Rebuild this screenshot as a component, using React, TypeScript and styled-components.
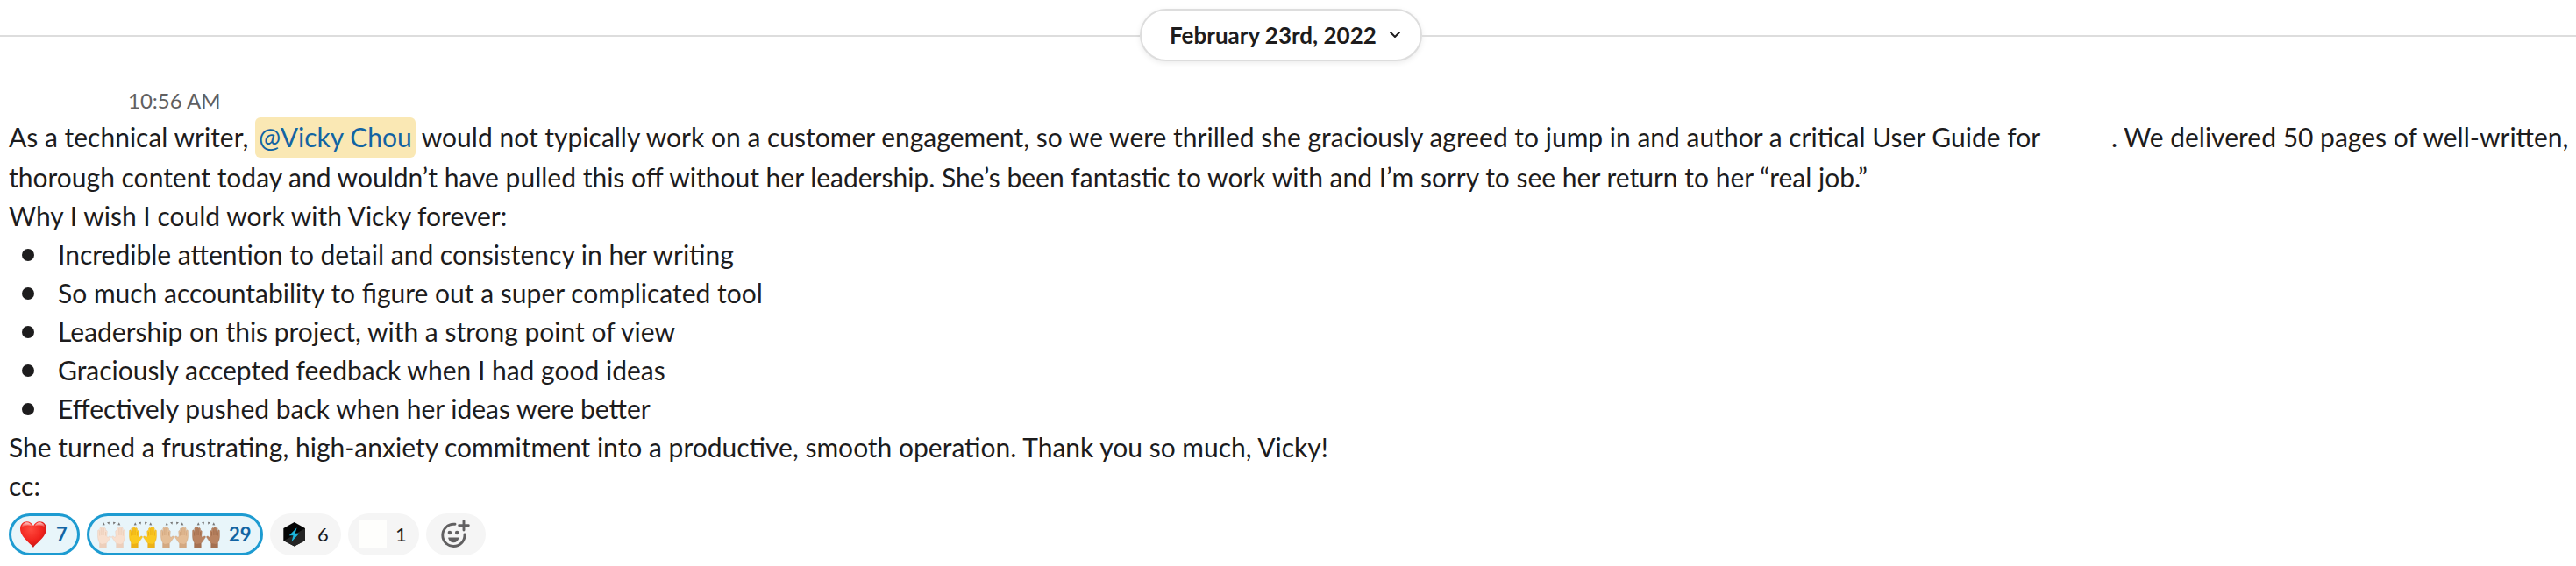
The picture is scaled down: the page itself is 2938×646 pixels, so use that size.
import React from "react";
import styled, { createGlobalStyle } from "styled-components";

const GlobalStyle = createGlobalStyle`
  body { margin: 0; background: #fff; }
  * { box-sizing: border-box; }
`;

const Page = styled.main`
  width: 2938px;
  height: 646px;
  overflow: hidden;
  background: #fff;
  color: #1d1c1d;
  font-family: Lato, "Noto Sans", sans-serif;
  font-size: 30px;
  line-height: 44px;
`;

const DateDivider = styled.header`
  display: flex;
  align-items: center;
  padding-top: 10px;
  height: 70px;
`;

const Rule = styled.span<{ $width?: number }>`
  height: 2px;
  margin-top: 2px;
  background: #dddddd;
  ${(p) => (p.$width ? `width: ${p.$width}px;` : "flex: 1;")}
`;

const DateButton = styled.button`
  display: flex;
  align-items: center;
  justify-content: space-between;
  width: 322px;
  height: 60px;
  padding: 0 22px 0 32px;
  border: 2px solid #dddddd;
  border-radius: 30px;
  background: #fff;
  box-shadow: 0 2px 6px rgba(0, 0, 0, 0.08);
  color: #1d1c1d;
  font: bold 26px/40px Lato, sans-serif;
  white-space: nowrap;
`;

const Time = styled.time`
  display: block;
  height: 64px;
  padding: 23px 0 0 146px;
  color: #616061;
  font-size: 24px;
  line-height: 44px;
`;

const Body = styled.article`
  padding-left: 10px;
  white-space: nowrap;
`;

const Line = styled.div<{ $tall?: boolean }>`
  height: ${(p) => (p.$tall ? 46 : 44)}px;
`;

const Mention = styled.span`
  display: inline-block;
  height: 46px;
  padding: 0 4px 2px;
  border-radius: 6px;
  background: #fae8b4;
  color: #1264a3;
`;

const Blank = styled.span`
  display: inline-block;
  width: 66px;
`;

const List = styled.ul`
  margin: 0;
  padding: 0;
  list-style: none;
`;

const Item = styled.li`
  display: flex;
  align-items: center;
  height: 44px;
  gap: 27px;
  padding-left: 15px;

  &::before {
    content: "";
    width: 14px;
    height: 14px;
    margin-top: 2px;
    border-radius: 50%;
    background: #1d1c1d;
  }
`;

const Reactions = styled.footer`
  display: flex;
  gap: 8px;
  padding: 10px 0 0 10px;
`;

const Reaction = styled.button<{ $active?: boolean; $width: number }>`
  display: flex;
  align-items: center;
  width: ${(p) => p.$width}px;
  height: 48px;
  padding: 0 0 0 12px;
  border: 0;
  border-radius: 24px;
  background: ${(p) => (p.$active ? "#e8f5fa" : "#f5f5f5")};
  box-shadow: ${(p) => (p.$active ? "inset 0 0 0 3px #1d9bd1" : "none")};
  color: ${(p) => (p.$active ? "#1264a3" : "#1d1c1d")};
  font: ${(p) => (p.$active ? "bold" : "normal")} 22px/44px Lato, sans-serif;
`;

const Emojis = styled.span`
  display: flex;
  gap: 4px;
`;

const Count = styled.span`
  margin-left: 10px;
`;

const EmptyEmoji = styled.span`
  width: 32px;
  height: 32px;
  background: #fefefc;
`;

const Heart = () => (
  <svg width="32" height="32" viewBox="0 0 32 32">
    <defs>
      <radialGradient id="heart" cx="0.4" cy="0.3" r="0.75">
        <stop offset="0" stopColor="#ff4a3e" />
        <stop offset="0.6" stopColor="#f0231d" />
        <stop offset="1" stopColor="#bd1110" />
      </radialGradient>
      <linearGradient id="shine" x1="0" y1="0" x2="0" y2="1">
        <stop offset="0" stopColor="#fff" stopOpacity="0.75" />
        <stop offset="1" stopColor="#fff" stopOpacity="0" />
      </linearGradient>
    </defs>
    <path
      d="M16 31C14 27 1 19 1 9.500C1 4.500 4.500 1.300 8.500 1.300C12 1.300 14.800 3.300 16 6.300C17.200 3.300 20 1.300 23.500 1.300C27.500 1.300 31 4.500 31 9.500C31 19 18 27 16 31Z"
      fill="url(#heart)"
    />
    <path d="M2.800 8C3.300 4.500 5.800 2.300 8.700 2.300C11.500 2.300 13.500 4 14.300 6.500C11 4.800 6 5 2.800 8Z" fill="url(#shine)" />
    <path d="M17.700 6.500C18.500 4 20.500 2.300 23.300 2.300C26.200 2.300 28.700 4.500 29.200 8C26 5 21 4.800 17.700 6.500Z" fill="url(#shine)" />
  </svg>
);

const HandShape = ({ skin, shade }: { skin: string; shade: string }) => (
  <g>
    <path
      d="M2.600 32V25.500C1 23 .400 20 .500 16.500L.600 11.500Q1.300 10.200 2.300 11.400L2.800 14V9Q3.600 7.300 4.600 8.800L4.900 12.500V8Q5.900 6.300 7 8L7.200 12.500V9Q8.200 7.500 9.300 9L9.800 12Q10.800 10.800 11.300 12.400L10.900 18L12 19.600Q13.200 17.500 14.700 18Q16 18.400 15.200 19.600C13.500 22 12 24.500 10.300 26.300V32Z"
      fill={skin}
      stroke={shade}
      strokeWidth="0.3"
    />
    <path d="M2.700 14V17.500M4.900 12.500V17M7.100 12.500V17M9.500 13V17.500" fill="none" stroke={shade} strokeWidth="0.5" />
    <path d="M2.600 25.500L5 27L10.300 26V32H2.600Z" fill={shade} opacity="0.45" />
  </g>
);

const RaisedHands = ({ skin, shade }: { skin: string; shade: string }) => (
  <svg width="32" height="32" viewBox="0 0 32 32">
    <path d="M5.700 5.400L7.200 2.200L8.800 5.200ZM11 2.300L14 1.800L13.400 4.800ZM18 1.800L21 2.300L18.400 4.800ZM24.800 2.200L26.300 5.400L23.200 5.200Z" fill="#777" />
    <HandShape skin={skin} shade={shade} />
    <g transform="translate(32 0) scale(-1 1)">
      <HandShape skin={skin} shade={shade} />
    </g>
  </svg>
);

const BoltHexagon = () => (
  <svg width="32" height="32" viewBox="0 0 32 32">
    <path d="M15.700 2L28 9V23L15.700 29.600L3.300 23V9Z" fill="#050505" />
    <path d="M28 9V23L15.700 29.600L3.800 23.200Z" fill="#242424" />
    <path d="M18.600 8.200L9.700 17.300H14.500L12.400 24.500L21.300 14.800H16.600Z" fill="#1cb5dc" />
  </svg>
);

const AddReaction = () => (
  <svg width="34" height="34" viewBox="0 0 34 34" fill="none" stroke="#616061" strokeWidth="2.900">
    <path d="M17 5.300H15.500A12.600 12.600 0 1 0 28 18V17" strokeLinecap="round" />
    <path d="M27 1.500V12M21.700 6.800H32.300" strokeLinecap="round" />
    <circle cx="10.900" cy="15" r="2.300" fill="#616061" stroke="none" />
    <circle cx="19.200" cy="15" r="2.300" fill="#616061" stroke="none" />
    <path d="M9.900 20.500H20.700C21.300 20.500 21.500 21 21.300 21.500C20.400 24.500 18.200 26.300 15.300 26.300C12.400 26.300 10.200 24.500 9.300 21.500C9.100 21 9.300 20.500 9.900 20.500Z" fill="#616061" stroke="none" />
  </svg>
);

const AddButton = styled(Reaction)`
  padding: 0 0 0 16px;
`;

const skins = [
  { skin: "#f8dfce", shade: "#dfbca5" },
  { skin: "#fbc91f", shade: "#dc960d" },
  { skin: "#e4bd96", shade: "#c09068" },
  { skin: "#b98361", shade: "#8d5b3d" },
];

const points = [
  "Incredible attention to detail and consistency in her writing",
  "So much accountability to figure out a super complicated tool",
  "Leadership on this project, with a strong point of view",
  "Graciously accepted feedback when I had good ideas",
  "Effectively pushed back when her ideas were better",
];

export default function App() {
  return (
    <Page>
      <GlobalStyle />
      <DateDivider>
        <Rule $width={1300} />
        <DateButton>
          February 23rd, 2022
          <svg width="14" height="10" viewBox="0 0 14 10" fill="none" stroke="#1d1c1d" strokeWidth="2">
            <path d="M2 2L7 7L12 2" strokeLinecap="round" strokeLinejoin="round" />
          </svg>
        </DateButton>
        <Rule />
      </DateDivider>
      <Time>10:56 AM</Time>
      <Body>
        <Line $tall>
          As a technical writer, <Mention>@Vicky Chou</Mention> would not typically work on a customer engagement, so we
          were thrilled she graciously agreed to jump in and author a critical User Guide for <Blank />
          {" . We delivered 50 pages of well-written,"}
        </Line>
        <Line>
          thorough content today and wouldn’t have pulled this off without her leadership. She’s been fantastic to work
          with and I’m sorry to see her return to her “real job.”
        </Line>
        <Line>Why I wish I could work with Vicky forever:</Line>
        <List>
          {points.map((text) => (
            <Item key={text}>{text}</Item>
          ))}
        </List>
        <Line>
          She turned a frustrating, high-anxiety commitment into a productive, smooth operation. Thank you so much,
          Vicky!
        </Line>
        <Line>cc:</Line>
      </Body>
      <Reactions>
        <Reaction $active $width={81}>
          <Heart />
          <Count>7</Count>
        </Reaction>
        <Reaction $active $width={201}>
          <Emojis>
            {skins.map((tone) => (
              <RaisedHands key={tone.skin} {...tone} />
            ))}
          </Emojis>
          <Count>29</Count>
        </Reaction>
        <Reaction $width={81}>
          <BoltHexagon />
          <Count>6</Count>
        </Reaction>
        <Reaction $width={81}>
          <EmptyEmoji />
          <Count>1</Count>
        </Reaction>
        <AddButton $width={68}>
          <AddReaction />
        </AddButton>
      </Reactions>
    </Page>
  );
}
